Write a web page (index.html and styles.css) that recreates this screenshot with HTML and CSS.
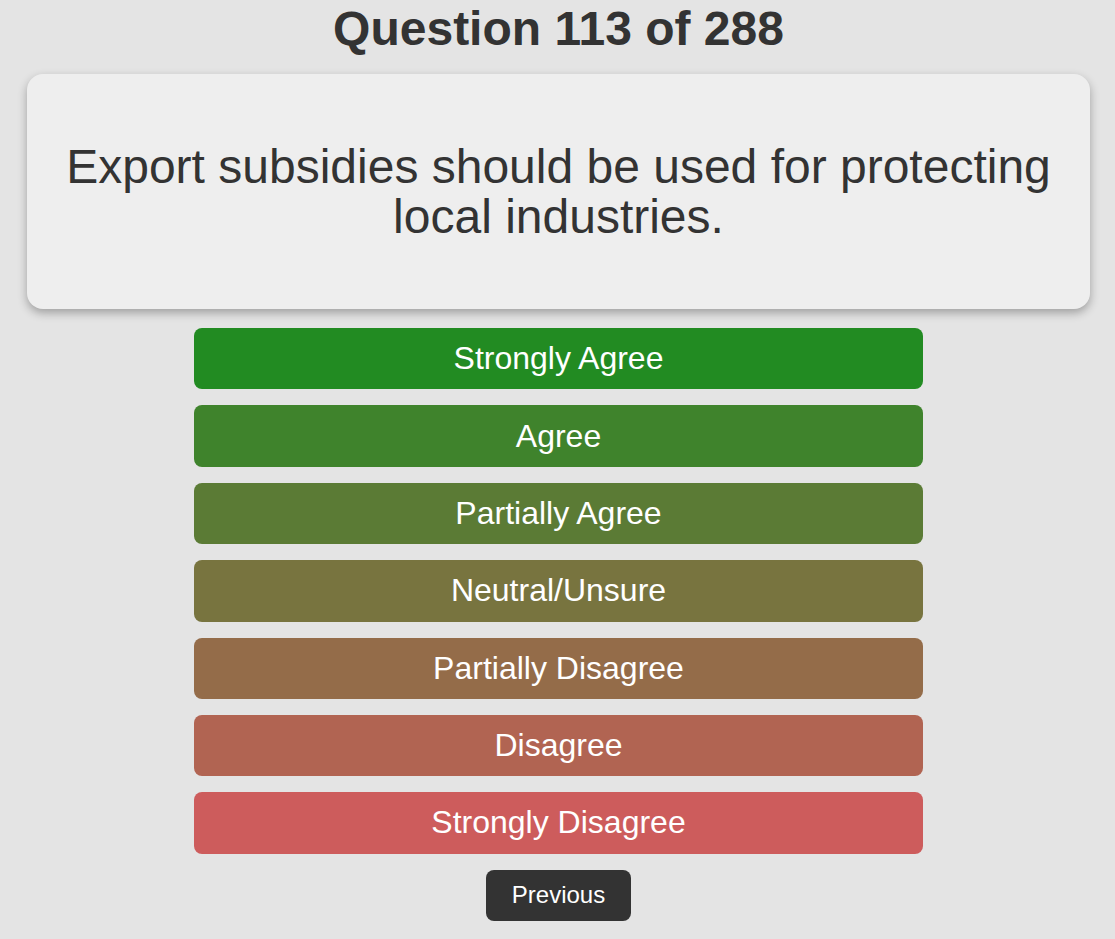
FILE: index.html
```html
<!DOCTYPE html>
<html lang="en">
<head>
  <meta charset="UTF-8">
  <meta name="viewport" content="width=device-width, initial-scale=1.0">
  <link rel="stylesheet" href="styles.css">
  <title>Quiz</title>
</head>
<body>

  <main class="quiz">
    <h1 class="counter">Question 113 of 288</h1>

    <div class="question-card">
      <p class="question-text">Export subsidies should be used for protecting local industries.</p>
    </div>

    <div class="answers">
      <button class="answer answer-sa">Strongly Agree</button>
      <button class="answer answer-a">Agree</button>
      <button class="answer answer-pa">Partially Agree</button>
      <button class="answer answer-n">Neutral/Unsure</button>
      <button class="answer answer-pd">Partially Disagree</button>
      <button class="answer answer-d">Disagree</button>
      <button class="answer answer-sd">Strongly Disagree</button>
    </div>

    <button class="previous">Previous</button>
  </main>

</body>
</html>
```

FILE: styles.css
```css
body {
  font-family: "Liberation Sans", Arial, sans-serif;
  margin: 0;
  background-color: #e4e4e4;
  color: #333;
}

.quiz {
  margin: 0 25px 0 27px;
  display: flex;
  flex-direction: column;
  align-items: center;
}

.counter {
  font-size: 48px;
  font-weight: bold;
  margin: 1px 0 18px;
  line-height: normal;
}

.question-card {
  align-self: stretch;
  background-color: #eeeeee;
  border-radius: 16px;
  box-shadow: 0 4px 10px rgba(0, 0, 0, 0.3);
  padding: 19.5px 30px;
  text-align: center;
}

.question-text {
  font-size: 48px;
  line-height: 50px;
  margin: 48px 0;
}

.answers {
  margin-top: 19px;
  width: 729px;
  display: flex;
  flex-direction: column;
  gap: 16px;
}

.answer {
  font-family: inherit;
  font-size: 32px;
  color: #fff;
  border: none;
  border-radius: 8px;
  padding: 12.2px 10px;
  cursor: pointer;
}

.answer-sa { background-color: #228b22; }
.answer-a { background-color: #3f832c; }
.answer-pa { background-color: #5b7b35; }
.answer-n { background-color: #78743f; }
.answer-pd { background-color: #946c49; }
.answer-d { background-color: #b16452; }
.answer-sd { background-color: #cd5c5c; }

.previous {
  margin-top: 16px;
  font-family: inherit;
  font-size: 24px;
  color: #fff;
  background-color: #333;
  border: none;
  border-radius: 8px;
  padding: 11.7px 26px;
  cursor: pointer;
}
```
